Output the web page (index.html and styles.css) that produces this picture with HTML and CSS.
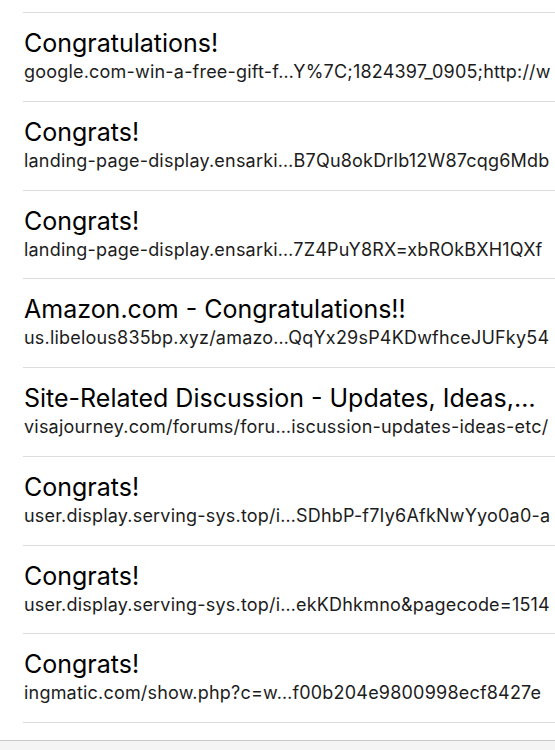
FILE: index.html
```html
<!DOCTYPE html>
<html lang="en">
<head>
  <meta charset="UTF-8" />
  <meta name="viewport" content="width=device-width, initial-scale=1.0" />
  <title>History</title>
  <link rel="stylesheet" href="styles.css">
</head>
<body>
  <ul class="history">
    <li class="entry">
      <div class="entry-title">Congratulations!</div>
      <div class="entry-url">google.com-win-a-free-gift-f…Y%7C;1824397_0905;http://w</div>
    </li>
    <li class="entry">
      <div class="entry-title">Congrats!</div>
      <div class="entry-url">landing-page-display.ensarki…B7Qu8okDrlb12W87cqg6Mdb</div>
    </li>
    <li class="entry">
      <div class="entry-title">Congrats!</div>
      <div class="entry-url">landing-page-display.ensarki…7Z4PuY8RX=xbROkBXH1QXf</div>
    </li>
    <li class="entry">
      <div class="entry-title">Amazon.com - Congratulations!!</div>
      <div class="entry-url">us.libelous835bp.xyz/amazo…QqYx29sP4KDwfhceJUFky54</div>
    </li>
    <li class="entry">
      <div class="entry-title">Site-Related Discussion - Updates, Ideas,…</div>
      <div class="entry-url">visajourney.com/forums/foru…iscussion-updates-ideas-etc/</div>
    </li>
    <li class="entry">
      <div class="entry-title">Congrats!</div>
      <div class="entry-url">user.display.serving-sys.top/i…SDhbP-f7Iy6AfkNwYyo0a0-a</div>
    </li>
    <li class="entry">
      <div class="entry-title">Congrats!</div>
      <div class="entry-url">user.display.serving-sys.top/i…ekKDhkmno&amp;pagecode=1514</div>
    </li>
    <li class="entry">
      <div class="entry-title">Congrats!</div>
      <div class="entry-url">ingmatic.com/show.php?c=w…f00b204e9800998ecf8427e</div>
    </li>
  </ul>
  <div class="toolbar"></div>
</body>
</html>
```

FILE: styles.css
```css
* {
  margin: 0;
  padding: 0;
  box-sizing: border-box;
}

body {
  font-family: Inter, 'Noto Sans', sans-serif;
  background: #fff;
  color: #000;
  height: 750px;
  overflow: hidden;
  display: flex;
  flex-direction: column;
}

.history {
  list-style: none;
  padding-top: 12px;
  margin-left: 23px;
  flex: 1;
}

.entry {
  height: 88.75px;
  border-top: 1px solid #dcdcdc;
  padding: 14px 0 0 1px;
  white-space: nowrap;
  overflow: hidden;
}

.entry:last-child {
  border-bottom: 1px solid #dcdcdc;
  height: 89.75px;
}

.entry-title {
  font-size: 25px;
  line-height: 32px;
  color: #000;
}

.entry-url {
  margin-top: 1px;
  font-size: 18px;
  line-height: 24px;
  letter-spacing: 0.2px;
  color: #1c1c1c;
}

.toolbar {
  height: 10px;
  background: #f4f4f4;
  border-top: 1px solid #c8c8c8;
}
```
